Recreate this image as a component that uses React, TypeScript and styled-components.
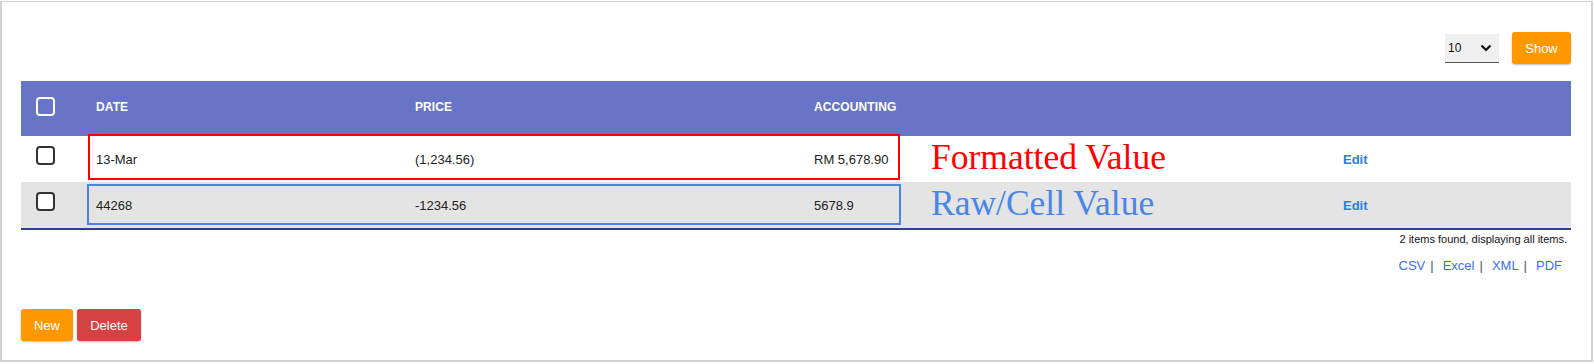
import React from "react";
import styled, { createGlobalStyle } from "styled-components";

const GlobalStyle = createGlobalStyle`
  html, body { margin: 0; padding: 0; background: #fff; }
  body { font-family: "Liberation Sans", Arial, sans-serif; color: #222; }
  * { box-sizing: border-box; }
`;

const Frame = styled.div`
  margin-top: 1px;
  width: 1593px;
  height: 361px;
  border: 2px solid #d2d2d2;
  border-top-width: 1px;
  padding: 30px 20px 0 19px;
  display: flex;
  flex-direction: column;
`;

const Toolbar = styled.div`
  height: 32px;
  display: flex;
  justify-content: flex-end;
  align-items: center;
  gap: 13px;
`;

const SelectBox = styled.div`
  width: 54px;
  height: 29px;
  background: #f0f0f0;
  border-bottom: 1px solid #555;
  display: flex;
  align-items: center;
  justify-content: space-between;
  padding: 0 7px 0 3px;
  font-size: 12px;
  color: #111;
`;

const Button = styled.button<{ $bg: string; $w: number }>`
  width: ${(p) => p.$w}px;
  height: 32px;
  border: none;
  border-radius: 3px;
  background: ${(p) => p.$bg};
  color: #fff;
  font-family: "Liberation Sans", Arial, sans-serif;
  font-size: 13px;
  padding: 0;
  box-shadow: 0 1px 2px rgba(0, 0, 0, 0.25);
  cursor: pointer;
`;

const Table = styled.div`
  position: relative;
  margin-top: 17px;
  border-bottom: 2px solid #2f3e9c;
`;

const cols = "67px 319px 399px 92px 437px 1fr";

const HeaderRow = styled.div`
  display: grid;
  grid-template-columns: ${cols};
  height: 55px;
  background: #6874c5;
  align-items: center;
  padding-bottom: 3px;
`;

const HeadCell = styled.div`
  padding-left: 8px;
  font-size: 12px;
  font-weight: bold;
  color: #fff;
  text-transform: uppercase;
  letter-spacing: 0.1px;
`;

const Row = styled.div<{ $alt?: boolean }>`
  display: grid;
  grid-template-columns: ${cols};
  height: 46px;
  background: ${(p) => (p.$alt ? "#e4e4e4" : "#fff")};
  align-items: center;
`;

const CheckCell = styled.div<{ $top: number }>`
  align-self: start;
  padding: ${(p) => p.$top}px 0 0 15px;
`;

const Check = styled.div<{ $light?: boolean }>`
  width: 19px;
  height: 19px;
  border: 2px solid ${(p) => (p.$light ? "#fff" : "#333")};
  border-radius: 4px;
  background: ${(p) => (p.$light ? "transparent" : "#fff")};
`;

const Cell = styled.div`
  padding-left: 8px;
  font-size: 13px;
  color: #222;
  white-space: nowrap;
`;

const Note = styled.div<{ $color: string }>`
  align-self: start;
  padding: 1px 0 0 33px;
  font-family: "Liberation Serif", "Times New Roman", serif;
  font-size: 35.5px;
  line-height: 40px;
  color: ${(p) => p.$color};
  white-space: nowrap;
`;

const EditLink = styled.a`
  padding-left: 8px;
  font-size: 13px;
  font-weight: bold;
  color: #2a7de1;
  text-decoration: none;
`;

const Marker = styled.div<{ $color: string; $l: number; $t: number; $w: number; $h: number }>`
  position: absolute;
  left: ${(p) => p.$l}px;
  top: ${(p) => p.$t}px;
  width: ${(p) => p.$w}px;
  height: ${(p) => p.$h}px;
  border: 2px solid ${(p) => p.$color};
  pointer-events: none;
`;

const Info = styled.div`
  margin-top: 2px;
  text-align: right;
  padding-right: 4px;
  font-size: 11px;
  line-height: 14px;
  color: #111;
`;

const Exports = styled.div`
  margin-top: 12px;
  display: flex;
  justify-content: flex-end;
  padding-right: 9px;
  font-size: 13px;
  line-height: 16px;
`;

const ExportLink = styled.a`
  color: #3b6ef5;
  text-decoration: none;
`;

const Sep = styled.span`
  color: #555;
  margin: 0 9px 0 5px;
`;

const Actions = styled.div`
  margin-top: 35px;
  display: flex;
  gap: 4px;
`;

const Chevron = () => (
  <svg width="12" height="8" viewBox="0 0 12 8">
    <path d="M1.5 1.5 L6 6 L10.5 1.5" fill="none" stroke="#111" strokeWidth="2.2" />
  </svg>
);

const rows = [
  { date: "13-Mar", price: "(1,234.56)", acc: "RM 5,678.90", note: "Formatted Value", color: "#ff0000" },
  { date: "44268", price: "-1234.56", acc: "5678.9", note: "Raw/Cell Value", color: "#4a86e8" },
];

export default function App() {
  return (
    <>
      <GlobalStyle />
      <Frame>
        <Toolbar>
          <SelectBox>
            <span>10</span>
            <Chevron />
          </SelectBox>
          <Button $bg="#ff9800" $w={59}>Show</Button>
        </Toolbar>
        <Table>
          <HeaderRow>
            <CheckCell $top={16}>
              <Check $light />
            </CheckCell>
            <HeadCell>Date</HeadCell>
            <HeadCell>Price</HeadCell>
            <HeadCell>Accounting</HeadCell>
            <HeadCell />
            <HeadCell />
          </HeaderRow>
          {rows.map((r, i) => (
            <Row key={i} $alt={i % 2 === 1}>
              <CheckCell $top={10}>
                <Check />
              </CheckCell>
              <Cell>{r.date}</Cell>
              <Cell>{r.price}</Cell>
              <Cell>{r.acc}</Cell>
              <Note $color={r.color}>{r.note}</Note>
              <EditLink href="#">Edit</EditLink>
            </Row>
          ))}
          <Marker $color="#ff0000" $l={67} $t={53} $w={812} $h={46} />
          <Marker $color="#4a86e8" $l={66} $t={103} $w={814} $h={41} />
        </Table>
        <Info>2 items found, displaying all items.</Info>
        <Exports>
          <ExportLink href="#">CSV</ExportLink>
          <Sep>|</Sep>
          <ExportLink href="#">Excel</ExportLink>
          <Sep>|</Sep>
          <ExportLink href="#">XML</ExportLink>
          <Sep>|</Sep>
          <ExportLink href="#">PDF</ExportLink>
        </Exports>
        <Actions>
          <Button $bg="#ff9800" $w={52}>New</Button>
          <Button $bg="#d64141" $w={64}>Delete</Button>
        </Actions>
      </Frame>
    </>
  );
}
